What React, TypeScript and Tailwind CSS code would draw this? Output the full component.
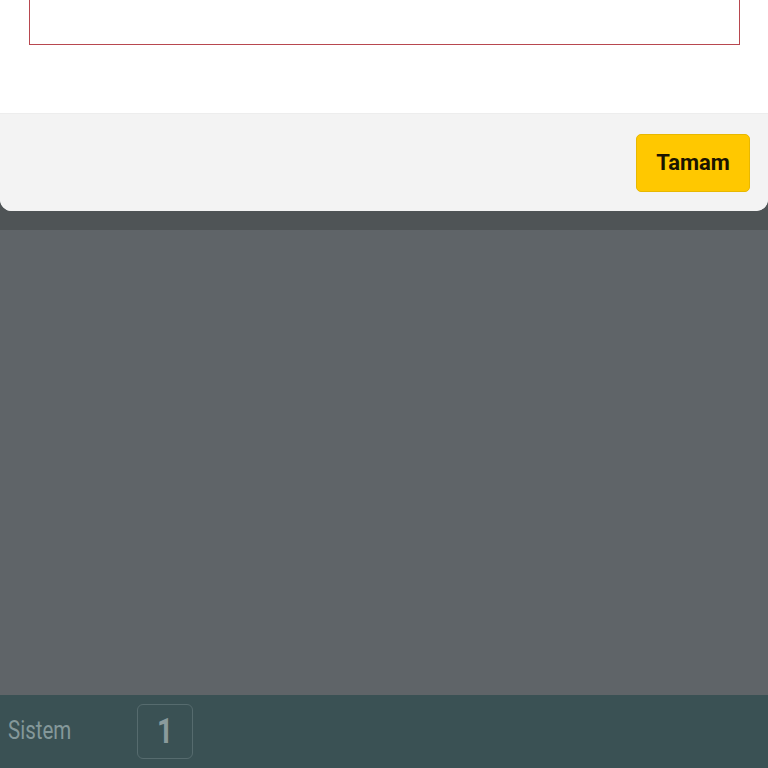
import React from "react";

export default function App() {
  return (
    <div
      className="w-[768px] h-[768px] overflow-hidden flex flex-col bg-[#5f6468]"
      style={{ fontFamily: "Roboto, 'Liberation Sans', sans-serif" }}
    >
      <div className="bg-[#4f5456]">
        <div className="bg-white rounded-b-[12px] overflow-hidden">
          <div className="h-[113px] pl-[29px] pr-[28px] overflow-hidden">
            <div className="-mt-[20px] h-[65px] border-[1.5px] border-[#b8474f] bg-white" />
          </div>
          <div className="h-[98px] bg-[#f3f3f3] border-t border-[#ededed] flex items-center justify-end pr-[18px]">
            <button className="w-[114px] h-[58px] bg-[#ffc800] border border-[#e8b800] rounded-[5px] text-[22px] font-bold text-[#1a1400] flex items-center justify-center">
              Tamam
            </button>
          </div>
        </div>
        <div className="h-[19px]" />
      </div>
      <div className="flex-1" />
      <div className="h-[73px] bg-[#3a5154] flex items-center">
        <div className="w-[137px] pl-[8px]">
          <span className="inline-block text-[25px] text-[#84989a] scale-x-[0.82] origin-left leading-none">
            Sistem
          </span>
        </div>
        <div className="w-[56px] h-[55px] border border-[#566b6e] rounded-[6px] flex items-center justify-center">
          <span className="inline-block text-[35px] font-bold text-[#8a9a9c] leading-none scale-x-[0.8]">
            1
          </span>
        </div>
      </div>
    </div>
  );
}
